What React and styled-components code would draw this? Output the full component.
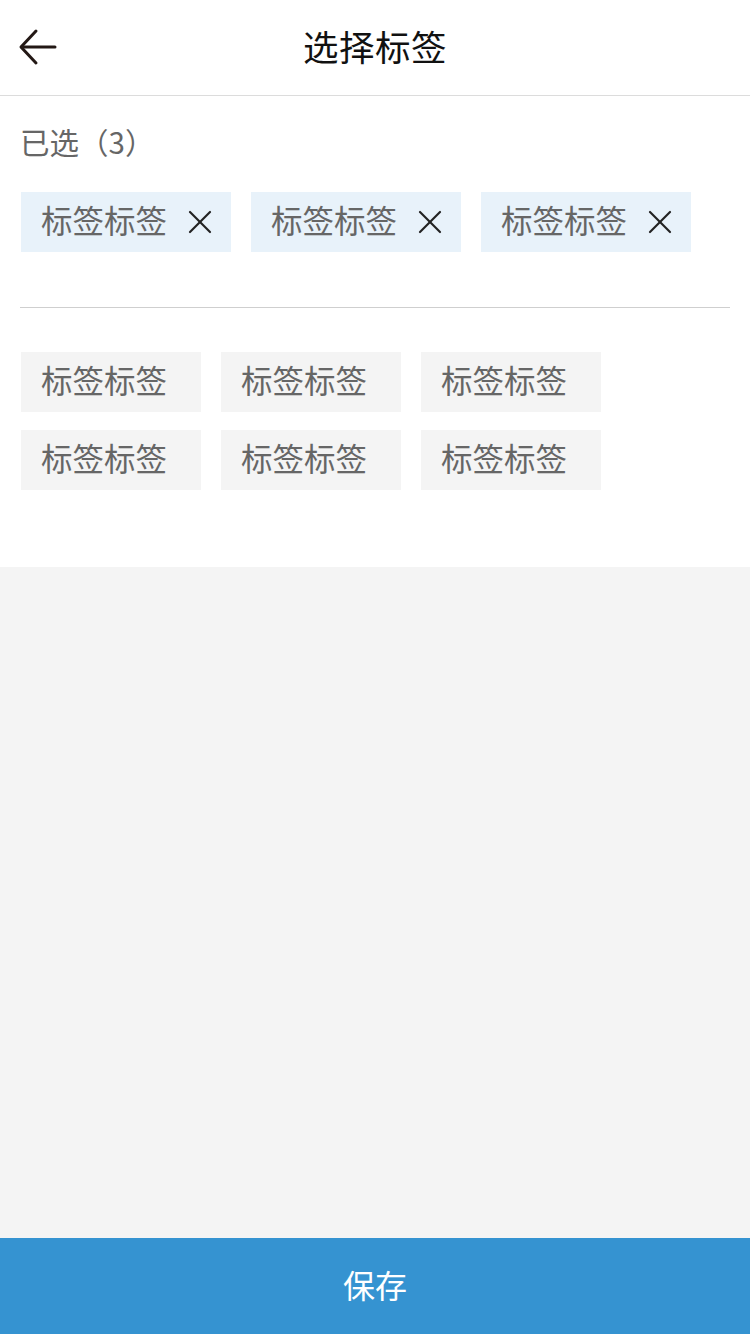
import React, { useState } from "react";
import styled, { createGlobalStyle } from "styled-components";

const GlobalStyle = createGlobalStyle`
    body {
        margin: 0;
        font-family: "Noto Sans CJK SC", "Noto Sans", sans-serif;
    }
`;

const Page = styled.div`
    height: 100vh;
    display: flex;
    flex-direction: column;
    background: #f4f4f4;
`;

const Header = styled.div`
    height: 95px;
    display: flex;
    align-items: center;
    justify-content: center;
    position: relative;
    background: #fff;
    border-bottom: 1px solid #dcdcdc;
`;

const Back = styled.div`
    position: absolute;
    left: 18px;
    top: 28px;
    width: 40px;
    height: 40px;
`;

const Title = styled.div`
    font-size: 35.5px;
    color: #111;
    letter-spacing: 0.5px;
    padding-bottom: 4px;
`;

const Body = styled.div`
    background: #fff;
    padding: 23px 0 77px;
`;

const Label = styled.div`
    font-size: 29.5px;
    line-height: 44px;
    color: #666;
    padding: 0 20px;
`;

const TagList = styled.div`
    display: flex;
    flex-wrap: wrap;
    gap: ${(p) => p.$rowGap}px 20px;
    padding: 0 21px;
`;

const Tag = styled.div`
    height: 60px;
    width: ${(p) => p.$w}px;
    box-sizing: border-box;
    padding-left: 20px;
    padding-bottom: 6px;
    display: flex;
    align-items: center;
    background: ${(p) => (p.$active ? "#e8f2fa" : "#f4f4f4")};
    color: #666;
    font-size: 31.5px;
`;

const Close = styled.span`
    display: flex;
    margin-left: 21px;
    margin-top: 5px;
`;

const Divider = styled.div`
    height: 1px;
    background: #cfcfcf;
    margin: 55px 20px 44px;
`;

const Filler = styled.div`
    flex: 1;
`;

const SaveButton = styled.div`
    height: 96px;
    background: #3593d1;
    color: #fff;
    font-size: 32px;
    display: flex;
    align-items: center;
    justify-content: center;
    padding-bottom: 4px;
    box-sizing: border-box;
`;

function App() {
    const [selected] = useState(["标签标签", "标签标签", "标签标签"]);
    const options = ["标签标签", "标签标签", "标签标签", "标签标签", "标签标签", "标签标签"];
    return (
        <Page>
            <GlobalStyle />
            <Header>
                <Back>
                    <svg width="40" height="40" viewBox="0 0 40 40" fill="none" stroke="#231815" strokeWidth="3" strokeLinecap="round" strokeLinejoin="round">
                        <polyline points="18,3 3,19 18,35" />
                        <line x1="4" y1="19" x2="37" y2="19" />
                    </svg>
                </Back>
                <Title>选择标签</Title>
            </Header>
            <Body>
                <Label>已选（{selected.length}）</Label>
                <div style={{ height: 29 }} />
                <TagList $rowGap={20}>
                    {selected.map((t, i) => (
                        <Tag key={i} $active $w={210}>
                            {t}
                            <Close>
                                <svg width="24" height="24" viewBox="0 0 24 24" stroke="#222" strokeWidth="2.2" strokeLinecap="round">
                                    <line x1="2" y1="2" x2="22" y2="22" />
                                    <line x1="22" y1="2" x2="2" y2="22" />
                                </svg>
                            </Close>
                        </Tag>
                    ))}
                </TagList>
                <Divider />
                <TagList $rowGap={18}>
                    {options.map((t, i) => (
                        <Tag key={i} $w={180}>{t}</Tag>
                    ))}
                </TagList>
            </Body>
            <Filler />
            <SaveButton>保存</SaveButton>
        </Page>
    );
}

export default App;
